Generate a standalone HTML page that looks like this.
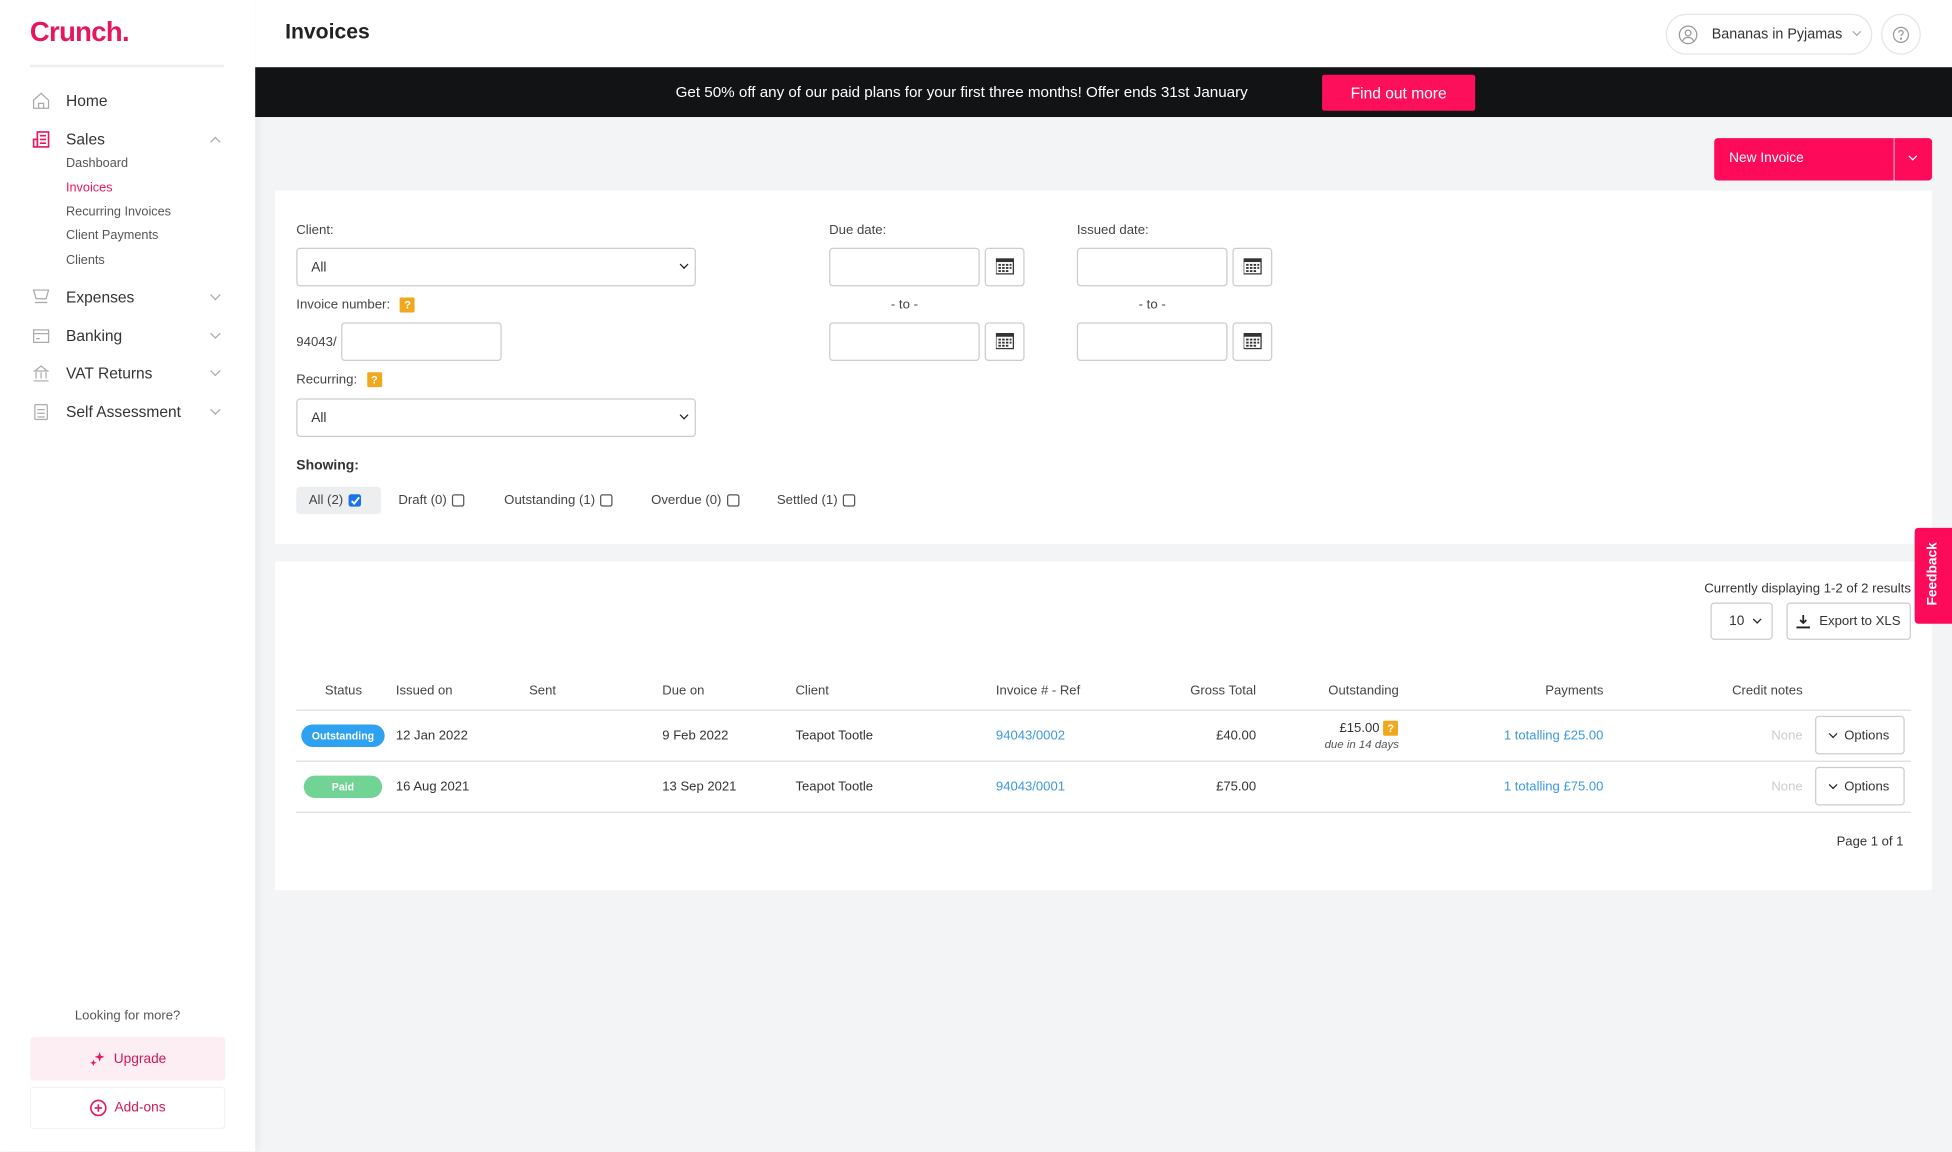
<!DOCTYPE html>
<html><head><meta charset="utf-8">
<style>
*{box-sizing:border-box;margin:0;padding:0}
html,body{width:1952px;height:1152px;overflow:hidden;background:#f3f4f6}
#w{position:absolute;left:0;top:0;width:1568px;height:925px;transform:scale(1.2449);transform-origin:0 0;font-family:"Liberation Sans",sans-serif;color:#333;background:#f3f4f6}
.a{position:absolute}
.side{left:0;top:0;width:205px;height:925px;background:#fff;box-shadow:2px 0 8px rgba(0,0,0,.06)}
.nav{font-size:12.5px;color:#333}
.sub{font-size:10.2px;color:#555}
.chev{width:6px;height:6px;border-right:1px solid #aaa;border-bottom:1px solid #aaa;transform:rotate(45deg)}
.lbl{font-size:10.6px;color:#444}
.inp{border:1px solid #ccc;border-radius:3px;background:#fff}
.cal{border:1px solid #ccc;border-radius:3px;background:#fff;width:32px;height:31px}
.th{font-size:10.5px;color:#444;top:549px}
.td{font-size:10.5px;color:#333}
.blue{color:#3c97e0}
.opt{border:1px solid #ccc;border-radius:3px;background:#fff;width:72px;height:31px;font-size:10.5px;display:flex;align-items:center;justify-content:center;gap:6px}
.q{background:#f2a81d;color:#fff;font-size:9px;font-weight:bold;width:12px;height:12px;display:inline-flex;align-items:center;justify-content:center;border-radius:1px}
.cb{width:10px;height:10px;border:1px solid #555;border-radius:2px;display:inline-block;vertical-align:middle;margin-left:4px;background:#fff}
</style></head><body><div id="w">
<div class="a side">
 <div class="a" style="left:24px;top:13px;font-size:22px;font-weight:bold;color:#e8175d;letter-spacing:-0.5px">Crunch.</div>
 <div class="a" style="left:24px;top:52px;width:156px;height:2px;background:#eee"></div>
 <svg class="a" style="left:26px;top:74px" width="14" height="14" viewBox="0 0 14 14" fill="none" stroke="#aaa"><path d="M1 6.5L7 1l6 5.5V13H1z M5 13V9h4v4"/></svg>
 <div class="a nav" style="left:53px;top:74px">Home</div>
 <svg class="a" style="left:26px;top:105px" width="14" height="14" viewBox="0 0 14 14" fill="none" stroke="#e8175d" stroke-width="1.3"><rect x="4" y="1" width="9" height="12"/><rect x="1" y="7" width="3" height="6"/><path d="M6 4h5M6 7h5M6 10h5"/></svg>
 <div class="a nav" style="left:53px;top:105px">Sales</div>
 <div class="a chev" style="left:170px;top:111px;transform:rotate(225deg)"></div>
 <div class="a sub" style="left:53px;top:126px">Dashboard</div>
 <div class="a sub" style="left:53px;top:146px;color:#e8175d">Invoices</div>
 <div class="a sub" style="left:53px;top:165px">Recurring Invoices</div>
 <div class="a sub" style="left:53px;top:184px">Client Payments</div>
 <div class="a sub" style="left:53px;top:204px">Clients</div>
 <svg class="a" style="left:26px;top:232px" width="14" height="14" viewBox="0 0 14 14" fill="none" stroke="#aaa"><path d="M1 1h12l-2 7H3z M2 11h10"/></svg>
 <div class="a nav" style="left:53px;top:232px">Expenses</div><div class="a chev" style="left:170px;top:234px"></div>
 <svg class="a" style="left:26px;top:263px" width="14" height="14" viewBox="0 0 14 14" fill="none" stroke="#aaa"><rect x="1" y="2" width="12" height="10"/><path d="M1 5h12M3 9h3"/></svg>
 <div class="a nav" style="left:53px;top:263px">Banking</div><div class="a chev" style="left:170px;top:265px"></div>
 <svg class="a" style="left:26px;top:293px" width="14" height="14" viewBox="0 0 14 14" fill="none" stroke="#aaa"><path d="M1 5h12M7 1L2 5h10z M3 6v5M7 6v5M11 6v5M1 13h12"/></svg>
 <div class="a nav" style="left:53px;top:293px">VAT Returns</div><div class="a chev" style="left:170px;top:295px"></div>
 <svg class="a" style="left:26px;top:324px" width="14" height="14" viewBox="0 0 14 14" fill="none" stroke="#aaa"><rect x="2" y="1" width="10" height="12" rx="1"/><path d="M4 5h6M4 8h6M4 11h6"/></svg>
 <div class="a nav" style="left:53px;top:324px">Self Assessment</div><div class="a chev" style="left:170px;top:326px"></div>
 <div class="a" style="left:0;width:205px;top:810px;text-align:center;font-size:10.5px;color:#555">Looking for more?</div>
 <div class="a" style="left:24px;top:833px;width:157px;height:35px;background:#fdeef3;border-radius:3px;display:flex;align-items:center;justify-content:center;gap:6px;font-size:11px;color:#d0165a"><svg width="14" height="14" viewBox="0 0 14 14" fill="#e8175d"><path d="M9 1l1 3 3 1-3 1-1 3-1-3-3-1 3-1z M4 7l.7 2 2 .7-2 .7L4 12.5l-.7-2-2-.7 2-.7z"/></svg>Upgrade</div>
 <div class="a" style="left:24px;top:873px;width:157px;height:34px;background:#fff;border:1px solid #f3f3f3;border-radius:3px;display:flex;align-items:center;justify-content:center;gap:6px;font-size:11px;color:#d0165a"><svg width="14" height="14" viewBox="0 0 14 14" fill="none" stroke="#e8175d" stroke-width="1.3"><circle cx="7" cy="7" r="6"/><path d="M7 4v6M4 7h6"/></svg>Add-ons</div>
</div>
<div class="a" style="left:205px;top:0;width:1363px;height:54px;background:#fff"></div>
<div class="a" style="left:229px;top:16px;font-size:17px;font-weight:bold;color:#222">Invoices</div>
<div class="a" style="left:1338px;top:11px;width:166px;height:33px;border:1px solid #e5e5e5;border-radius:17px;display:flex;align-items:center;padding-left:9px;font-size:11.5px;color:#333">
 <svg width="16" height="16" viewBox="0 0 16 16" fill="none" stroke="#999"><circle cx="8" cy="8" r="7"/><circle cx="8" cy="6.5" r="2.3"/><path d="M3.5 13c1-2.3 2.5-3 4.5-3s3.5.7 4.5 3"/></svg>
 <span style="margin-left:11px">Bananas in Pyjamas</span><span class="chev" style="margin-left:9px;margin-top:-4px;display:inline-block;width:5px;height:5px"></span></div>
<div class="a" style="left:1511px;top:11px;width:32px;height:33px;border:1px solid #e5e5e5;border-radius:50%;display:flex;align-items:center;justify-content:center"><svg width="14" height="14" viewBox="0 0 14 14" fill="none" stroke="#999"><circle cx="7" cy="7" r="6"/><path d="M5.3 5.3a1.7 1.7 0 1 1 2.4 1.5c-.5.3-.7.6-.7 1.2"/><circle cx="7" cy="10" r=".4" fill="#999"/></svg></div>
<div class="a" style="left:205px;top:54px;width:1363px;height:40px;background:#121314"></div>
<div class="a" style="left:530px;top:67px;width:485px;text-align:center;font-size:12.2px;color:#fff;white-space:nowrap">Get 50% off any of our paid plans for your first three months! Offer ends 31st January</div>
<div class="a" style="left:1062px;top:60px;width:123px;height:29px;background:#fe0f5c;border-radius:2px;color:#fff;font-size:12.5px;display:flex;align-items:center;justify-content:center">Find out more</div>
<div class="a" style="left:1377px;top:111px;width:175px;height:34px;background:#fe0a5a;border-radius:3px"></div>
<div class="a" style="left:1521px;top:111px;width:1px;height:34px;background:#fff9"></div>
<div class="a" style="left:1389px;top:121px;font-size:11px;color:#fff">New Invoice</div>
<div class="a" style="left:1534px;top:123px;width:5px;height:5px;border-right:1px solid #fff;border-bottom:1px solid #fff;transform:rotate(45deg)"></div>
<div class="a" style="left:221px;top:153px;width:1331px;height:284px;background:#fff"></div>
<div class="a lbl" style="left:238px;top:179px">Client:</div>
<div class="a inp" style="left:238px;top:199px;width:321px;height:31px"><span class="a" style="left:11px;top:9px;font-size:11px">All</span><span class="a" style="right:6px;top:10px;width:5px;height:5px;border-right:1.5px solid #222;border-bottom:1.5px solid #222;transform:rotate(45deg)"></span></div>
<div class="a lbl" style="left:238px;top:239px">Invoice number: <span class="q" style="margin-left:5px">?</span></div>
<div class="a lbl" style="left:238px;top:269px">94043/</div>
<div class="a inp" style="left:274px;top:259px;width:129px;height:31px"></div>
<div class="a lbl" style="left:238px;top:299px">Recurring: <span class="q" style="margin-left:5px">?</span></div>
<div class="a inp" style="left:238px;top:320px;width:321px;height:31px"><span class="a" style="left:11px;top:9px;font-size:11px">All</span><span class="a" style="right:6px;top:10px;width:5px;height:5px;border-right:1.5px solid #222;border-bottom:1.5px solid #222;transform:rotate(45deg)"></span></div>
<div class="a" style="left:238px;top:368px;font-size:11.2px;font-weight:bold;color:#333">Showing:</div>
<div class="a" style="left:238px;top:391px;width:68px;height:22px;background:#eceef0;border-radius:3px"></div>
<div class="a lbl" style="left:248px;top:396px">All (2)<span class="cb" style="background:#1a73e8;border-color:#1a73e8;position:relative"><svg class="a" style="left:0;top:0" width="9" height="9" viewBox="0 0 9 9"><path d="M1.5 4.5l2 2 4-5" stroke="#fff" stroke-width="1.5" fill="none"/></svg></span></div>
<div class="a lbl" style="left:320px;top:396px">Draft (0)<span class="cb"></span></div>
<div class="a lbl" style="left:405px;top:396px">Outstanding (1)<span class="cb"></span></div>
<div class="a lbl" style="left:523px;top:396px">Overdue (0)<span class="cb"></span></div>
<div class="a lbl" style="left:624px;top:396px">Settled (1)<span class="cb"></span></div>
<div class="a lbl" style="left:666px;top:179px">Due date:</div>
<div class="a lbl" style="left:865px;top:179px">Issued date:</div>
<div class="a inp" style="left:666px;top:199px;width:121px;height:31px"></div>
<div class="a inp" style="left:666px;top:259px;width:121px;height:31px"></div>
<div class="a inp" style="left:865px;top:199px;width:121px;height:31px"></div>
<div class="a inp" style="left:865px;top:259px;width:121px;height:31px"></div>
<div class="a lbl" style="left:666px;width:121px;text-align:center;top:239px">- to -</div>
<div class="a lbl" style="left:865px;width:121px;text-align:center;top:239px">- to -</div>
<svg width="0" height="0" style="position:absolute"><defs><g id="c"><rect x="0" y="1" width="14" height="12" fill="#fff" stroke="#333"/><rect x="0" y="1" width="14" height="2.5" fill="#333"/><g fill="#333"><rect x="2" y="5" width="2" height="1.5"/><rect x="5" y="5" width="2" height="1.5"/><rect x="8" y="5" width="2" height="1.5"/><rect x="11" y="5" width="1.5" height="1.5"/><rect x="2" y="7.5" width="2" height="1.5"/><rect x="5" y="7.5" width="2" height="1.5"/><rect x="8" y="7.5" width="2" height="1.5"/><rect x="11" y="7.5" width="1.5" height="1.5"/><rect x="2" y="10" width="2" height="1.5"/><rect x="5" y="10" width="2" height="1.5"/><rect x="8" y="10" width="2" height="1.5"/></g></g></defs></svg>
<div class="a cal" style="left:791px;top:199px"><svg class="a" style="left:8px;top:7px" width="15" height="15"><use href="#c"/></svg></div>
<div class="a cal" style="left:791px;top:259px"><svg class="a" style="left:8px;top:7px" width="15" height="15"><use href="#c"/></svg></div>
<div class="a cal" style="left:990px;top:199px"><svg class="a" style="left:8px;top:7px" width="15" height="15"><use href="#c"/></svg></div>
<div class="a cal" style="left:990px;top:259px"><svg class="a" style="left:8px;top:7px" width="15" height="15"><use href="#c"/></svg></div>
<div class="a" style="left:221px;top:451px;width:1331px;height:264px;background:#fff"></div>
<div class="a" style="right:33px;top:467px;font-size:10.6px;color:#333">Currently displaying 1-2 of 2 results</div>
<div class="a inp" style="left:1374px;top:484px;width:50px;height:30px"><span class="a" style="left:14px;top:8px;font-size:11px">10</span><span class="a" style="right:9px;top:10px;width:5px;height:5px;border-right:1.5px solid #222;border-bottom:1.5px solid #222;transform:rotate(45deg)"></span></div>
<div class="a inp" style="left:1435px;top:484px;width:100px;height:30px;display:flex;align-items:center;justify-content:center;gap:7px;font-size:10.6px"><svg width="11" height="11" viewBox="0 0 11 11"><path d="M5.5 0v6M3 4l2.5 2.5L8 4" stroke="#222" stroke-width="1.4" fill="none"/><path d="M0 10h11" stroke="#222" stroke-width="1.5"/></svg>Export to XLS</div>
<div class="a th" style="left:261px">Status</div>
<div class="a th" style="left:318px">Issued on</div>
<div class="a th" style="left:425px">Sent</div>
<div class="a th" style="left:532px">Due on</div>
<div class="a th" style="left:639px">Client</div>
<div class="a th" style="left:800px">Invoice # - Ref</div>
<div class="a th" style="right:559px">Gross Total</div>
<div class="a th" style="left:1067px">Outstanding</div>
<div class="a th" style="right:280px">Payments</div>
<div class="a th" style="right:120px">Credit notes</div>
<div class="a" style="left:238px;top:570px;width:1297px;height:1px;background:#ddd"></div>
<div class="a" style="left:238px;top:611px;width:1297px;height:1px;background:#ddd"></div>
<div class="a" style="left:238px;top:652px;width:1297px;height:1px;background:#ddd"></div>
<div class="a" style="left:242px;top:582px;width:67px;height:18px;border-radius:9px;background:#2ea2f0;color:#fff;font-size:8.5px;font-weight:bold;display:flex;align-items:center;justify-content:center">Outstanding</div>
<div class="a" style="left:244px;top:623px;width:63px;height:18px;border-radius:9px;background:#72d494;color:#fff;font-size:8.5px;font-weight:bold;display:flex;align-items:center;justify-content:center">Paid</div>
<div class="a td" style="left:318px;top:585px">12 Jan 2022</div>
<div class="a td" style="left:532px;top:585px">9 Feb 2022</div>
<div class="a td" style="left:639px;top:585px">Teapot Tootle</div>
<div class="a td blue" style="left:800px;top:585px">94043/0002</div>
<div class="a td" style="right:559px;top:585px">£40.00</div>
<div class="a td" style="left:1076px;top:579px">£15.00 <span class="q">?</span></div>
<div class="a" style="left:1064px;top:593px;font-size:9.2px;font-style:italic;color:#555">due in 14 days</div>
<div class="a td blue" style="right:280px;top:585px">1 totalling £25.00</div>
<div class="a td" style="right:120px;top:585px;color:#ccc">None</div>
<div class="a opt" style="left:1458px;top:575px"><span style="width:5px;height:5px;border-right:1.5px solid #222;border-bottom:1.5px solid #222;transform:rotate(45deg);margin-top:-3px"></span>Options</div>
<div class="a td" style="left:318px;top:626px">16 Aug 2021</div>
<div class="a td" style="left:532px;top:626px">13 Sep 2021</div>
<div class="a td" style="left:639px;top:626px">Teapot Tootle</div>
<div class="a td blue" style="left:800px;top:626px">94043/0001</div>
<div class="a td" style="right:559px;top:626px">£75.00</div>
<div class="a td blue" style="right:280px;top:626px">1 totalling £75.00</div>
<div class="a td" style="right:120px;top:626px;color:#ccc">None</div>
<div class="a opt" style="left:1458px;top:616px"><span style="width:5px;height:5px;border-right:1.5px solid #222;border-bottom:1.5px solid #222;transform:rotate(45deg);margin-top:-3px"></span>Options</div>
<div class="a td" style="right:39px;top:670px">Page 1 of 1</div>
<div class="a" style="left:1538px;top:424px;width:30px;height:77px;background:#fe0a5a;border-radius:3px 0 0 3px"></div>
<div class="a" style="left:1514px;top:455px;width:77px;text-align:center;transform:rotate(-90deg);font-size:11px;font-weight:bold;color:#fff">Feedback</div>
</div></body></html>
